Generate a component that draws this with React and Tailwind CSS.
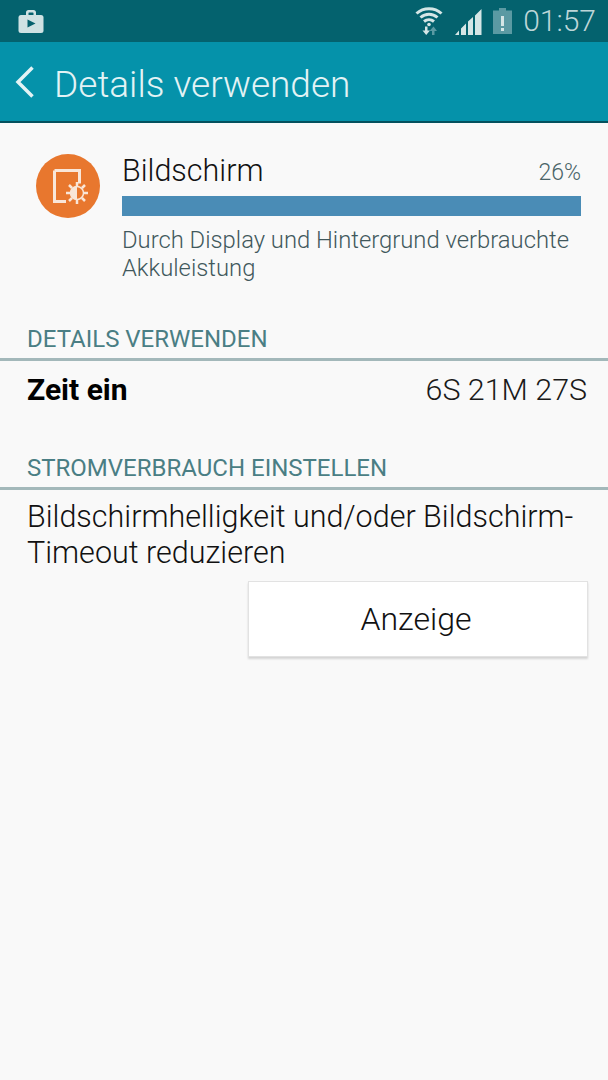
import React from 'react';

const StoreBag = () => (
    <svg width="26" height="26" viewBox="0 0 26 26">
        <path d="M8 8V4.500C8 3 9 2 10.500 2h5C17 2 18 3 18 4.500V8h-2.500V5c0-.4-.2-.6-.6-.6h-3.800c-.4 0-.6.2-.6.6v3z" fill="#cfe2e3" />
        <rect x="0.500" y="7" width="25" height="18" rx="2.500" fill="#cfe2e3" />
        <path d="M9.500 11.500l8 4-8 4z" fill="#04606c" />
    </svg>
);

const WifiIcon = () => (
    <svg width="28" height="30" viewBox="0 0 28 30" fill="none">
        <path d="M1.500 7.500C8.500 1 19.500 1 26.500 7.500" stroke="#d5e6e6" strokeWidth="3" />
        <path d="M5.500 11.500C10.500 7 17.500 7 22.500 11.500" stroke="#d5e6e6" strokeWidth="3" />
        <path d="M9 15.500C12 13 16 13 19 15.500" stroke="#d5e6e6" strokeWidth="3" />
        <circle cx="14" cy="18.500" r="1.800" fill="#d5e6e6" />
        <path d="M10 20.500h2.500v4H15L11.200 29 7.500 24.500H10z" fill="#d5e6e6" />
        <path d="M17 29v-4h-2.500l4-4.500 3.500 4.500h-2.500v4z" fill="#5b9aa3" />
    </svg>
);

const SignalIcon = () => (
    <svg width="27" height="27" viewBox="0 0 27 27" fill="#d5e6e6">
        <path d="M0 27h4v-4.500zM6 27h5V15.500L6 20.500zM13 27h5V9L13 13.500zM20 27h6.500V1L20 7.500z" />
    </svg>
);

const BatteryIcon = () => (
    <svg width="19" height="26" viewBox="0 0 19 26">
        <path d="M6 0h7v2.500h6V26H0V2.500h6z" fill="#5b9aa3" />
        <rect x="8" y="8" width="3" height="10" fill="#d5e6e6" />
        <rect x="8" y="20" width="3" height="3" fill="#d5e6e6" />
    </svg>
);

const BackChevron = () => (
    <svg width="22" height="34" viewBox="0 0 22 34" fill="none">
        <path d="M18.500 2.500L4 17l14.500 14.500" stroke="#e3f3f5" strokeWidth="3.500" />
    </svg>
);

const ScreenIcon = () => (
    <svg width="64" height="64" viewBox="0 0 64 64">
        <circle cx="32" cy="32" r="32" fill="#e8772e" />
        <path d="M18.500 16.500h25v13M30 47.500H18.500V16.500" fill="none" stroke="#f9e6d8" strokeWidth="3" />
        <g stroke="#f9e6d8" strokeWidth="2.500">
            <path d="M41 28v4M41 46v4M30 39h4M48 39h4M33 31l3 3M46 44l3 3M33 47l3-3M46 34l3-3" />
        </g>
        <circle cx="41" cy="39" r="6.500" fill="#e8772e" stroke="#f9e6d8" strokeWidth="1.500" />
        <path d="M41 32.500a6.500 6.500 0 0 0 0 13z" fill="#f9e6d8" />
    </svg>
);

const SectionHeader = ({ title }) => (
    <div>
        <div className="px-[27px] text-[24px] leading-[28px] text-[#4a7e84]">{title}</div>
        <div className="mt-[5px] h-[3px] bg-[#a3b8ba]"></div>
    </div>
);

const App = () => {
    return (
        <div className="w-[608px] h-[1080px] bg-[#f9f9f9] font-['Roboto',sans-serif] overflow-hidden">
            {/* status bar */}
            <div className="h-[42px] bg-[#04626e] flex items-center justify-between pl-[18px] pr-[12px]">
                <StoreBag />
                <div className="flex items-center">
                    <WifiIcon />
                    <div className="ml-[12px]"><SignalIcon /></div>
                    <div className="ml-[11px]"><BatteryIcon /></div>
                    <span className="ml-[11px] text-[30px] font-light text-[#bcd6d8] leading-none">01:57</span>
                </div>
            </div>

            {/* action bar */}
            <div className="h-[81px] bg-[#0592aa] border-b-2 border-[#04515e] flex items-center pl-[14px]">
                <BackChevron />
                <h1 className="ml-[18px] mt-[5px] text-[37px] font-light text-[#e3f3f5] leading-none">Details verwenden</h1>
            </div>

            {/* usage entry */}
            <div className="flex pl-[36px] pr-[27px] pt-[31px]">
                <ScreenIcon />
                <div className="ml-[22px] flex-1 -mt-[2px]">
                    <div className="flex justify-between items-end h-[38px]">
                        <span className="text-[30.500px] font-light text-[#111] leading-[38px]">Bildschirm</span>
                        <span className="text-[23px] font-light text-[#4a6468] leading-[34px]">26%</span>
                    </div>
                    <div className="mt-[6px] h-[20px] bg-[#4a8cb6]"></div>
                    <p className="mt-[10px] text-[23.800px] font-light leading-[28px] text-[#41585c]">
                        Durch Display und Hintergrund verbrauchte Akkuleistung
                    </p>
                </div>
            </div>

            <div className="mt-[43px]">
                <SectionHeader title="DETAILS VERWENDEN" />
            </div>
            <div className="flex justify-between pr-[21px] pl-[27px] mt-[12px]">
                <span className="text-[30px] font-bold text-black leading-[34px]">Zeit ein</span>
                <span className="text-[30.400px] text-[#1a1a1a] font-light leading-[34px]">6S 21M 27S</span>
            </div>

            <div className="mt-[47px]">
                <SectionHeader title="STROMVERBRAUCH EINSTELLEN" />
            </div>
            <p className="px-[27px] mt-[9px] text-[30.500px] font-light leading-[36px] text-[#111]">
                Bildschirmhelligkeit und/oder Bildschirm-Timeout reduzieren
            </p>

            <div className="flex justify-end pr-[20px] mt-[10px]">
                <button className="w-[340px] h-[76px] pr-[4px] bg-white border border-[#e2e2e2] shadow-[0_2px_2px_rgba(0,0,0,0.15)] text-[32px] font-light text-[#111]">
                    Anzeige
                </button>
            </div>
        </div>
    );
};

export default App;
